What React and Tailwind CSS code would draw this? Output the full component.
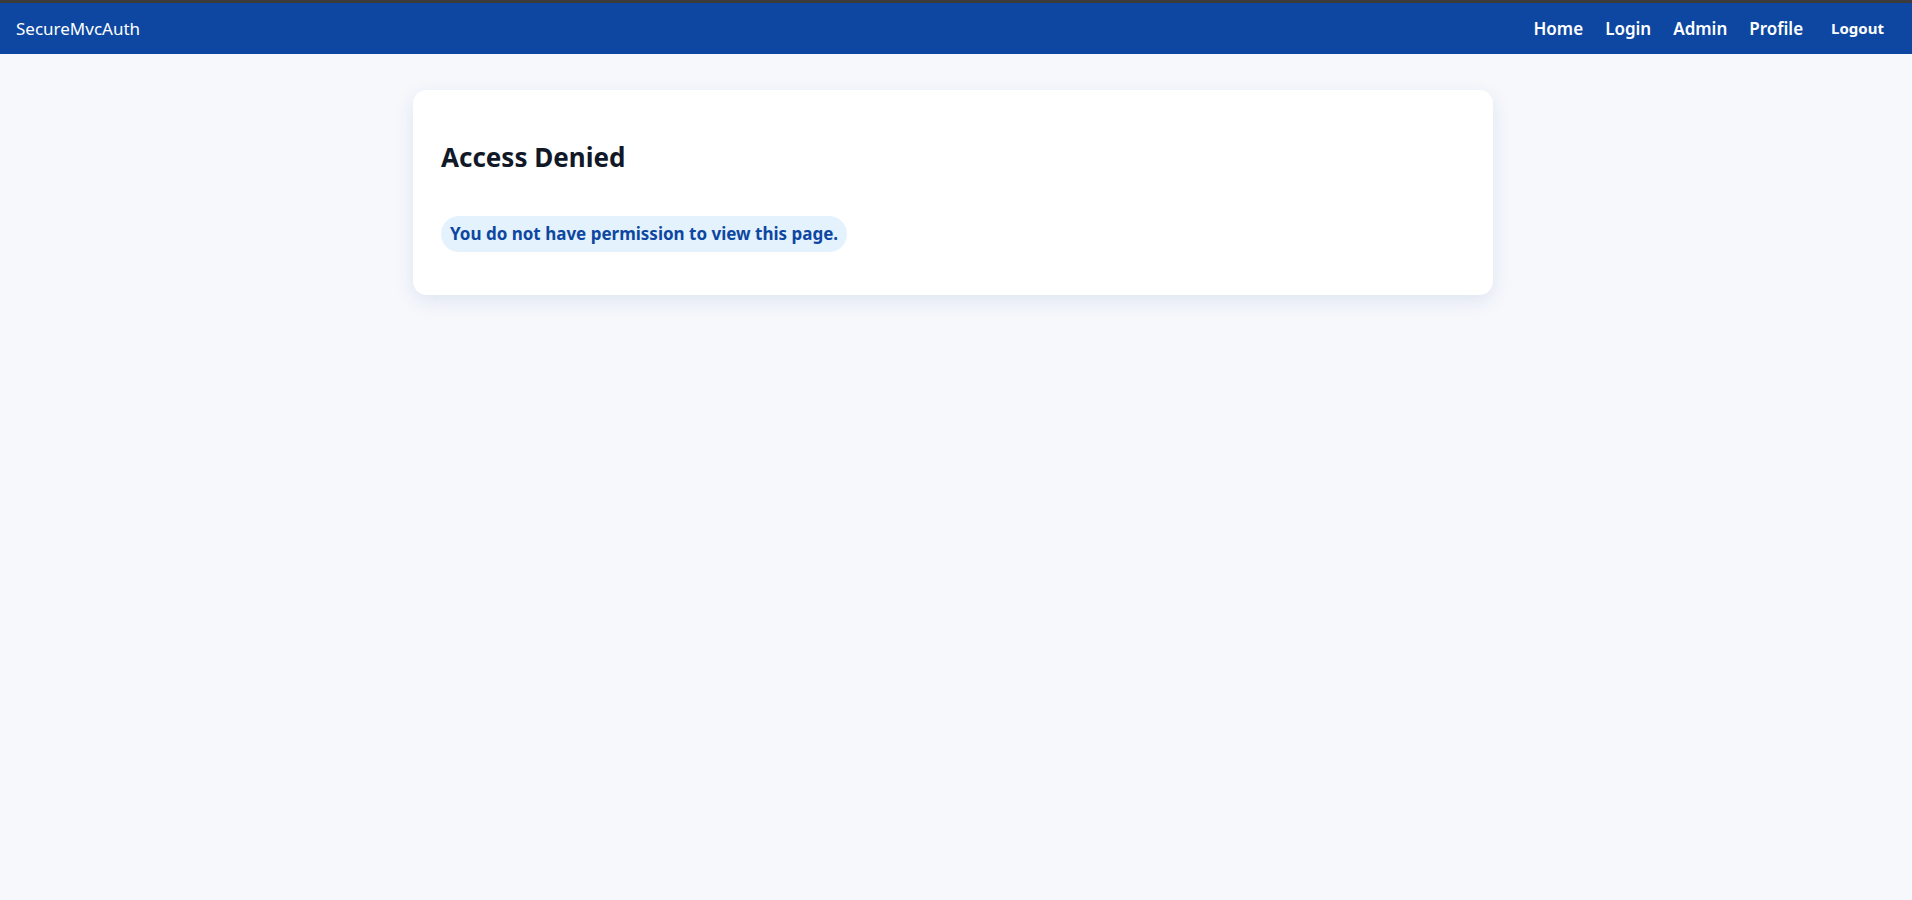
export default function App() {
  const links = ['Home', 'Login', 'Admin', 'Profile']

  return (
    <div className="min-h-screen bg-[#f6f8fc]" style={{ fontFamily: '"Noto Sans", sans-serif' }}>
      <nav className="h-[54px] border-t-[3px] border-[#3b3b3b] bg-[#0d47a1] text-white flex items-center justify-between pl-4 pr-[28px]">
        <span className="text-[17px]">SecureMvcAuth</span>
        <div className="flex items-center">
          <div className="flex items-center gap-[22px]">
            {links.map(l => (
              <a key={l} className="text-[17px] font-semibold">{l}</a>
            ))}
          </div>
          <button className="ml-[28px] text-[15px] font-bold">Logout</button>
        </div>
      </nav>

      <main className="pt-[36px] pl-[10px] pr-[16px]">
        <div className="max-w-[1080px] mx-auto bg-white rounded-[14px] shadow-[0_6px_20px_rgba(30,60,140,0.10)] px-[28px] pt-[51px] pb-[43px]">
          <h2 className="text-[26px] font-bold text-[#111827] leading-[33px]">Access Denied</h2>
          <p className="mt-[42px] inline-block rounded-full bg-[#e3f2fd] text-[#0d47a1] font-bold text-[17px] px-[9px] py-[5px]">
            You do not have permission to view this page.
          </p>
        </div>
      </main>
    </div>
  )
}
